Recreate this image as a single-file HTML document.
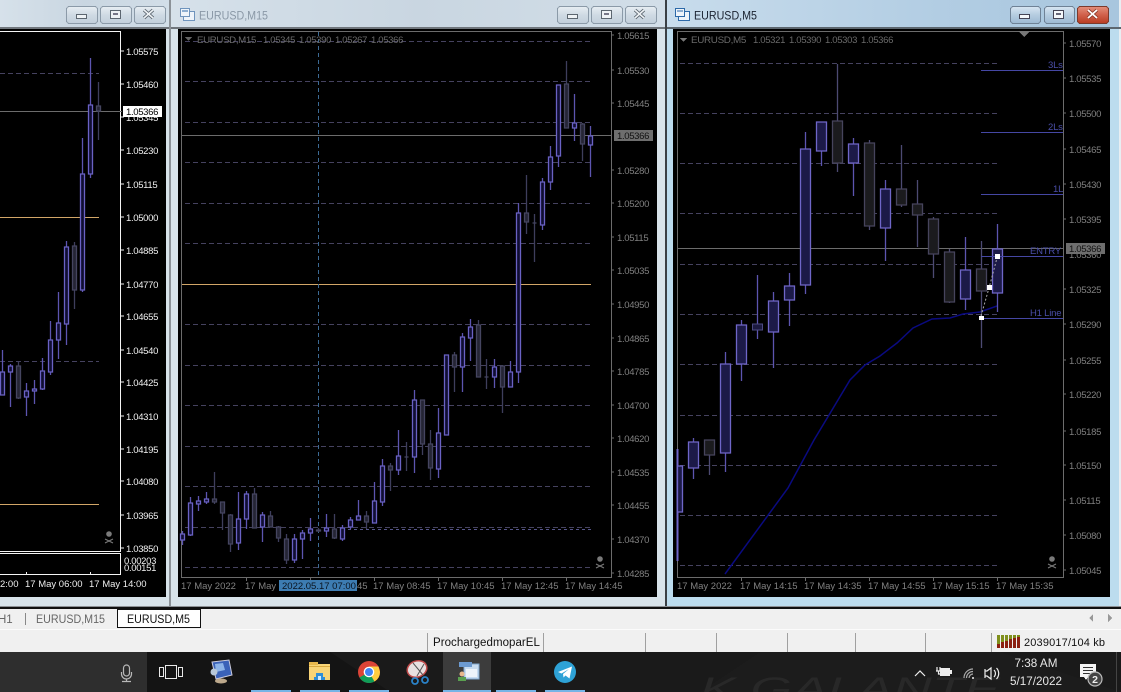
<!DOCTYPE html>
<html><head><meta charset="utf-8"><title>EURUSD</title>
<style>
html,body{margin:0;padding:0;background:#000;width:1121px;height:692px;overflow:hidden}
svg{display:block;position:absolute;left:0;top:0}
text{font-family:"Liberation Sans",sans-serif}
.p{font-size:9.5px;letter-spacing:-.33px;fill:#808080}
.w{font-size:9.5px;letter-spacing:-.33px;fill:#f0f0f0}
.t{font-size:9.5px;fill:#808080}
.tw{font-size:9.5px;fill:#eee}
.l{font-size:9.5px;letter-spacing:-.33px;fill:#6a6a6a}
.g{stroke:#45425f;stroke-width:1;stroke-dasharray:5 3;fill:none}
.bw,.bb,.rw,.rb,.bb5,.rb5,.rw5{shape-rendering:auto;stroke-width:1.3}
.bw{stroke:#5c55b0;fill:none}
.bb{stroke:#6a62c4;fill:#100e32}
.rw{stroke:#3e3e5c;fill:none}
.rb{stroke:#454560;fill:#252535}
.bb5{stroke:#6f66c8;fill:#1c1a48}
.rb5{stroke:#46445c;fill:#1b1b1e}
.rw5{stroke:#4c4a72;fill:none}
.lv{font-size:9.5px;fill:#4a4ea8;letter-spacing:-.2px}
.btn{stroke:#8b9aa8;stroke-width:1}
.gl{fill:none;stroke:#555;stroke-width:1.2}
</style></head><body>
<svg width="1121" height="692" viewBox="0 0 1121 692" xmlns="http://www.w3.org/2000/svg" shape-rendering="crispEdges">
<defs>
<linearGradient id="ti" x1="0" y1="0" x2="1" y2="0"><stop offset="0" stop-color="#d6e1ea"/><stop offset=".5" stop-color="#c9d6e1"/><stop offset="1" stop-color="#d2dee8"/></linearGradient>
<linearGradient id="ta" x1="0" y1="0" x2="1" y2="0"><stop offset="0" stop-color="#c8dcec"/><stop offset=".6" stop-color="#b2cde3"/><stop offset="1" stop-color="#a8c6de"/></linearGradient>
<linearGradient id="bg" x1="0" y1="0" x2="0" y2="1"><stop offset="0" stop-color="#e8eef3"/><stop offset=".5" stop-color="#cfdae4"/><stop offset="1" stop-color="#c2cfdb"/></linearGradient>
<linearGradient id="ba" x1="0" y1="0" x2="0" y2="1"><stop offset="0" stop-color="#d8e6f2"/><stop offset=".5" stop-color="#b5cce0"/><stop offset="1" stop-color="#9dbad3"/></linearGradient>
<linearGradient id="br" x1="0" y1="0" x2="0" y2="1"><stop offset="0" stop-color="#e4907c"/><stop offset=".5" stop-color="#d0604a"/><stop offset="1" stop-color="#b83c22"/></linearGradient>
</defs>

<!-- frames -->
<rect width="1121" height="692" fill="#f0f0f0"/>
<rect x="0" y="0" width="169" height="607" fill="#d8e3ea"/>
<rect x="0" y="0" width="169" height="28" fill="url(#ti)"/>
<rect x="169" y="0" width="2" height="607" fill="#8c9298"/>
<rect x="171" y="0" width="494" height="607" fill="#d8e3ea"/>
<rect x="171" y="0" width="494" height="28" fill="url(#ti)"/>
<rect x="665" y="0" width="2" height="607" fill="#3a3f44"/>
<rect x="667" y="0" width="454" height="607" fill="#bcdcee"/>
<rect x="667" y="0" width="454" height="28" fill="url(#ta)"/>
<rect x="1119" y="0" width="2" height="607" fill="#e8eef2"/>
<rect x="0" y="27" width="169" height="2" fill="#70767c"/>
<rect x="171" y="27" width="494" height="2" fill="#70767c"/>
<rect x="667" y="27" width="454" height="2" fill="#5c666e"/>
<rect x="0" y="606" width="1121" height="1" fill="#8c9094"/>
<rect x="0" y="607" width="1121" height="2" fill="#101010"/>

<!-- black panes -->
<rect x="0" y="29" width="166" height="568" fill="#000"/>
<rect x="178" y="29" width="479" height="568" fill="#000"/>
<rect x="673" y="29" width="437" height="568" fill="#000"/>

<!-- title text & icons -->
<text x="199" y="19.5" font-size="11.5" fill="#8a98a6" textLength="69" lengthAdjust="spacingAndGlyphs">EURUSD,M15</text>
<text x="694" y="19.5" font-size="11.5" fill="#1a2230" textLength="63" lengthAdjust="spacingAndGlyphs">EURUSD,M5</text>
<g stroke="#6f94bd" fill="#eef4fa">
<rect x="183.5" y="11.5" width="11" height="9"/><rect x="180.5" y="8.5" width="9" height="8"/>
<rect x="678.5" y="11.5" width="11" height="9" stroke="#2c69a8"/><rect x="675.5" y="8.5" width="9" height="8" stroke="#2c69a8"/>
</g>
<path d="M182 11h6M677 11h6" stroke="#2c69a8" fill="none"/>

<!-- buttons win 1 -->
<rect class="btn" x="66.5" y="6.5" width="31" height="17" rx="3" fill="url(#bg)"/>
<rect class="btn" x="100.5" y="6.5" width="31" height="17" rx="3" fill="url(#bg)"/>
<rect class="btn" x="134.5" y="6.5" width="31" height="17" rx="3" fill="url(#bg)"/>
<rect x="76.5" y="14.5" width="10" height="4" fill="#eef2f5" stroke="#5c6670"/>
<rect x="110.5" y="10.5" width="10" height="8" fill="#eef2f5" stroke="#5c6670"/><rect x="113" y="13" width="5" height="2" fill="#778"/>
<path d="M144 10l9 8M153 10l-9 8" stroke="#5c6670" stroke-width="3.4" shape-rendering="auto"/><path d="M144 10l9 8M153 10l-9 8" stroke="#eef2f5" stroke-width="1.6" shape-rendering="auto"/>
<!-- buttons win 2 -->
<rect class="btn" x="557.5" y="6.5" width="31" height="17" rx="3" fill="url(#bg)"/>
<rect class="btn" x="591.5" y="6.5" width="31" height="17" rx="3" fill="url(#bg)"/>
<rect class="btn" x="625.5" y="6.5" width="31" height="17" rx="3" fill="url(#bg)"/>
<rect x="567.5" y="14.5" width="10" height="4" fill="#eef2f5" stroke="#5c6670"/>
<rect x="601.5" y="10.5" width="10" height="8" fill="#eef2f5" stroke="#5c6670"/><rect x="604" y="13" width="5" height="2" fill="#778"/>
<path d="M635 10l9 8M644 10l-9 8" stroke="#5c6670" stroke-width="3.4" shape-rendering="auto"/><path d="M635 10l9 8M644 10l-9 8" stroke="#eef2f5" stroke-width="1.6" shape-rendering="auto"/>
<!-- buttons win 3 -->
<rect x="1010.5" y="6.5" width="30" height="17" rx="3" fill="url(#ba)" stroke="#6f8296"/>
<rect x="1044.5" y="6.5" width="30" height="17" rx="3" fill="url(#ba)" stroke="#6f8296"/>
<rect x="1077.5" y="6.5" width="31" height="17" rx="3" fill="url(#br)" stroke="#7c3a2c"/>
<rect x="1019.5" y="14.5" width="10" height="4" fill="#f4f7fa" stroke="#445"/>
<rect x="1053.5" y="10.5" width="10" height="8" fill="#f4f7fa" stroke="#445"/><rect x="1056" y="13" width="5" height="2" fill="#667"/>
<path d="M1088 10l9 8M1097 10l-9 8" stroke="#8a3a2c" stroke-width="3.4" shape-rendering="auto"/><path d="M1088 10l9 8M1097 10l-9 8" stroke="#fff" stroke-width="1.8" shape-rendering="auto"/>

<!-- ================= CHART 1 ================= -->
<path d="M0 31.5H120.5V551.5H0M0 553.5H120.5V574.5H0" fill="none" stroke="#f4f4f4"/>
<path d="M121 51h3M121 84h3M121 117h3M121 150h3M121 184h3M121 217h3M121 250h3M121 284h3M121 316h3M121 350h3M121 382h3M121 416h3M121 449h3M121 481h3M121 515h3M121 548h3M26.5 575v-3M90.5 575v-3" stroke="#eee" fill="none"/>
<path class="g" d="M0 73.5H99M0 361.5H99"/>
<path d="M0 217.5H99M0 504.5H99" stroke="#d2a668" fill="none"/>
<path d="M0 111.5H122" stroke="#6c6c6c" fill="none"/>
<path class="bw" d="M2.5 350V395M10.5 364V407M26.5 383V416M34.5 380V404M42.5 358V390M50.5 321V375M58.5 292V359M66.5 241V345M82.5 138V292M90.5 58V178"/>
<path class="rw" d="M18.5 362V399M74.5 242V309M98.5 82V140"/>
<path class="bb" d="M.5 372h4v23h-4zM8.5 366h4v6h-4zM24.5 391h4v6h-4zM32.5 389h4v2h-4zM40.5 371h4v18h-4zM48.5 340h4v32h-4zM56.5 323h4v17h-4zM64.5 247h4v77h-4zM80.5 174h4v116h-4zM88.5 105h4v69h-4z"/>
<path class="rb" d="M16.5 366h4v32h-4zM72.5 246h4v44h-4zM96.5 106h4v5h-4z"/>
<g>
<text class="w" x="126" y="55">1.05575</text><text class="w" x="126" y="88">1.05460</text><text class="w" x="126" y="121">1.05345</text><text class="w" x="126" y="154">1.05230</text><text class="w" x="126" y="188">1.05115</text><text class="w" x="126" y="221">1.05000</text><text class="w" x="126" y="254">1.04885</text><text class="w" x="126" y="288">1.04770</text><text class="w" x="126" y="320">1.04655</text><text class="w" x="126" y="354">1.04540</text><text class="w" x="126" y="386">1.04425</text><text class="w" x="126" y="420">1.04310</text><text class="w" x="126" y="453">1.04195</text><text class="w" x="126" y="485">1.04080</text><text class="w" x="126" y="519">1.03965</text><text class="w" x="126" y="552">1.03850</text><text class="w" x="124" y="564">0.00203</text><text class="w" x="124" y="571">0.00151</text>
</g>
<rect x="123" y="106" width="39" height="11" fill="#fff"/>
<text x="126" y="115" font-size="9.5" letter-spacing="-.33" fill="#000">1.05366</text>
<text class="tw" x="0" y="587">2:00</text><text class="tw" x="25" y="587">17 May 06:00</text><text class="tw" x="89" y="587">17 May 14:00</text>

<!-- ================= CHART 2 ================= -->
<path d="M181.5 31.5H611.5V577.5H181.5Z" fill="none" stroke="#6c6c6c"/>
<path d="M612 35h2M612 70h2M612 103h2M612 170h2M612 203h2M612 237h2M612 270h2M612 304h2M612 338h2M612 371h2M612 405h2M612 438h2M612 472h2M612 505h2M612 539h2M612 573h2M246.5 578v3M310.5 578v3M374.5 578v3M438.5 578v3M502.5 578v3M566.5 578v3" stroke="#6c6c6c" fill="none"/>
<path class="g" d="M185 41.5H592M185 81.5H592M185 122.5H592M185 162.5H592M185 203.5H592M185 243.5H592M185 324.5H592M185 365.5H592M185 405.5H592M185 446.5H592M185 486.5H592M185 527.5H592M185 567.5H592"/>
<path d="M342 529.5H592" stroke="#55558a" stroke-dasharray="3 3" fill="none"/>
<path d="M182 284.5H591" stroke="#d2a668" fill="none"/>
<path d="M182 135.5H611" stroke="#6c6c6c" fill="none"/>
<path d="M318.5 32V577" stroke="#3c6a94" stroke-dasharray="4 3" fill="none"/>
<path class="bw" d="M182.5 531V545M190.5 497V536M198.5 496V511M206.5 492V504M238.5 492V550M246.5 491V529M262.5 512V542M294.5 534V563M302.5 530V559M310.5 518V541M326.5 514V537M342.5 525V541M350.5 517V529M358.5 500V520M374.5 482V523M382.5 459V506M398.5 430V475M414.5 390V473M438.5 408V478M446.5 355V435M462.5 333V392M470.5 319V361M494.5 359V388M510.5 361V387M518.5 203V383M542.5 178V230M550.5 146V190M558.5 85V167M574.5 94V141M590.5 126V177"/>
<path class="rw" d="M214.5 472V504M222.5 502V530M230.5 514V552M254.5 488V528M270.5 511V527M278.5 526V542M286.5 534V564M318.5 528V532M334.5 514V539M366.5 511V529M390.5 463V491M406.5 442V471M422.5 400V455M430.5 430V480M454.5 352V392M478.5 320V377M486.5 359V389M502.5 365V413M526.5 175V234M534.5 214V262M566.5 61V128M582.5 123V161"/>
<path class="bb" d="M180.5 534h4v6h-4zM188.5 503h4v32h-4zM196.5 501h4v3h-4zM204.5 499h4v3h-4zM236.5 519h4v24h-4zM244.5 494h4v25h-4zM260.5 515h4v12h-4zM292.5 539h4v21h-4zM300.5 533h4v6h-4zM308.5 529h4v4h-4zM324.5 528h4v3h-4zM340.5 528h4v11h-4zM348.5 520h4v7h-4zM356.5 516h4v4h-4zM372.5 501h4v22h-4zM380.5 466h4v36h-4zM396.5 456h4v14h-4zM412.5 400h4v57h-4zM436.5 433h4v36h-4zM444.5 355h4v80h-4zM460.5 337h4v30h-4zM468.5 327h4v11h-4zM492.5 367h4v10h-4zM508.5 372h4v15h-4zM516.5 213h4v159h-4zM540.5 182h4v43h-4zM548.5 157h4v25h-4zM556.5 85h4v71h-4zM572.5 123h4v5h-4zM588.5 136h4v9h-4z"/>
<path class="rb" d="M212.5 499h4v3h-4zM220.5 502h4v11h-4zM228.5 515h4v29h-4zM252.5 494h4v34h-4zM268.5 516h4v11h-4zM276.5 527h4v11h-4zM284.5 539h4v21h-4zM316.5 530h4v1h-4zM332.5 529h4v9h-4zM364.5 516h4v6h-4zM388.5 466h4v4h-4zM404.5 457h4M420.5 400h4v44h-4zM428.5 444h4v24h-4zM452.5 355h4v12h-4zM476.5 325h4v52h-4zM484.5 377h4M500.5 366h4v21h-4zM524.5 213h4v9h-4zM532.5 223h4M564.5 84h4v44h-4zM580.5 124h4v20h-4z"/>
<path d="M185 37h7l-3.500 4z" fill="#666"/>
<text class="l" x="197" y="43" textLength="59" lengthAdjust="spacingAndGlyphs">EURUSD,M15</text><text class="l" x="263" y="43">1.05345</text><text class="l" x="299" y="43">1.05390</text><text class="l" x="335" y="43">1.05267</text><text class="l" x="371" y="43">1.05366</text>
<g>
<text class="p" x="617" y="39">1.05615</text><text class="p" x="617" y="74">1.05530</text><text class="p" x="617" y="107">1.05445</text><text class="p" x="617" y="174">1.05280</text><text class="p" x="617" y="207">1.05200</text><text class="p" x="617" y="241">1.05115</text><text class="p" x="617" y="274">1.05035</text><text class="p" x="617" y="308">1.04950</text><text class="p" x="617" y="342">1.04865</text><text class="p" x="617" y="375">1.04785</text><text class="p" x="617" y="409">1.04700</text><text class="p" x="617" y="442">1.04620</text><text class="p" x="617" y="476">1.04535</text><text class="p" x="617" y="509">1.04455</text><text class="p" x="617" y="543">1.04370</text><text class="p" x="617" y="577">1.04285</text>
</g>
<rect x="614" y="130" width="39" height="11" fill="#6e6e6e"/>
<text x="617" y="139" font-size="9.5" letter-spacing="-.33" fill="#111">1.05366</text>
<text class="t" x="181" y="589">17 May 2022</text><text class="t" x="245" y="589">17 May</text>
<rect x="279" y="580" width="78" height="11" fill="#3d7cb2"/>
<text x="282" y="589" font-size="9.5" fill="#0a1420">2022.05.17 07:00</text>
<text class="t" x="357" y="589">45</text><text class="t" x="373" y="589">17 May 08:45</text><text class="t" x="437" y="589">17 May 10:45</text><text class="t" x="501" y="589">17 May 12:45</text><text class="t" x="565" y="589">17 May 14:45</text>

<!-- ================= CHART 3 ================= -->
<path d="M677.500 31.500H1063.500V577.500H677.500Z" fill="none" stroke="#6c6c6c"/>
<path d="M1064 43h2M1064 78h2M1064 113h2M1064 149h2M1064 184h2M1064 219h2M1064 289h2M1064 324h2M1064 360h2M1064 394h2M1064 431h2M1064 465h2M1064 500h2M1064 535h2M1064 570h2M741.500 578v3M805.500 578v3M869.500 578v3M933.500 578v3M997.500 578v3" stroke="#6c6c6c" fill="none"/>
<path class="g" d="M680 63.500H998M680 113.500H998M680 163.500H998M680 213.500H998M680 264.500H998M680 314.500H998M680 364.500H998M680 415.500H998M680 465.500H998M680 515.500H998M680 565.500H998"/>
<path d="M678 248.500H1063" stroke="#6c6c6c" fill="none"/>
<path d="M725 574L788 488L814 440L850 380L865 365L880 356L897 343L913 328L932 319L950 318L963 314L980 312L997 306" fill="none" stroke="#0a0a80" stroke-width="1.5" shape-rendering="auto"/>
<path class="bw" d="M693.500 438V479M725.500 352V472M741.500 320V381M757.500 275V339M773.500 292V368M789.500 273V326M805.500 132V294M821.500 122V166M853.500 138V196M885.500 180V261M965.500 237V310M997.500 224V312"/>
<path d="M677.500 449V561" stroke="#6f66c8" stroke-width="2" fill="none"/>
<path class="rw5" d="M709.500 440V475M837.500 64V172M869.500 140V230M901.500 145V207M917.500 180V247M933.500 217V278M949.500 249V303M981.500 241V348"/>
<path class="bb5" d="M677.500 466H682.500V512H677.500ZM688.500 442h10v26h-10zM720.500 364h10v89h-10zM736.500 325h10v39h-10zM768.500 301h10v31h-10zM784.500 286h10v14h-10zM800.500 149h10v136h-10zM816.500 122h10v29h-10zM848.500 144h10v19h-10zM880.500 189h10v39h-10zM960.500 270h10v29h-10zM992.500 249h10v44h-10z"/>
<path class="rb5" d="M704.500 440h10v15h-10zM832.500 121h10v42h-10zM864.500 143h10v83h-10zM896.500 189h10v16h-10zM912.500 204h10v11h-10zM928.500 219h10v35h-10zM944.500 252h10v50h-10zM976.500 269h10v22h-10z"/>
<path d="M752.500 324h10v6h-10z" fill="#1c1a40" stroke="#4c4a82"/>
<path d="M981 70.500H1063M981 132.500H1063M981 194.500H1063M981 256.500H1063M981 318.500H1063" stroke="#4547a4" fill="none"/>
<path d="M981 316L989 288L997 258" fill="none" stroke="#aaa" stroke-dasharray="2 2" shape-rendering="auto"/>
<path d="M979 316h5v4h-5zM987 285h5v5h-5zM995 254h5v5h-5z" fill="#fff"/>
<text class="lv" x="1048" y="68">3Ls</text><text class="lv" x="1048" y="130">2Ls</text><text class="lv" x="1053" y="192">1L</text><text class="lv" x="1030" y="254">ENTRY</text><text class="lv" x="1030" y="316">H1 Line</text>
<path d="M1018 31h12l-6 6z" fill="#777"/>
<path d="M680 38h7l-3.500 4z" fill="#777"/>
<text class="l" x="691" y="43" textLength="55" lengthAdjust="spacingAndGlyphs">EURUSD,M5</text><text class="l" x="753" y="43">1.05321</text><text class="l" x="789" y="43">1.05390</text><text class="l" x="825" y="43">1.05303</text><text class="l" x="861" y="43">1.05366</text>
<g>
<text class="p" x="1069" y="47">1.05570</text><text class="p" x="1069" y="82">1.05535</text><text class="p" x="1069" y="117">1.05500</text><text class="p" x="1069" y="153">1.05465</text><text class="p" x="1069" y="188">1.05430</text><text class="p" x="1069" y="223">1.05395</text><text class="p" x="1069" y="258">1.05360</text><text class="p" x="1069" y="293">1.05325</text><text class="p" x="1069" y="328">1.05290</text><text class="p" x="1069" y="364">1.05255</text><text class="p" x="1069" y="398">1.05220</text><text class="p" x="1069" y="435">1.05185</text><text class="p" x="1069" y="469">1.05150</text><text class="p" x="1069" y="504">1.05115</text><text class="p" x="1069" y="539">1.05080</text><text class="p" x="1069" y="574">1.05045</text>
</g>
<rect x="1066" y="243" width="39" height="11" fill="#6e6e6e"/>
<text x="1069" y="252" font-size="9.5" letter-spacing="-.33" fill="#111">1.05366</text>
<text class="t" x="677" y="589">17 May 2022</text><text class="t" x="740" y="589">17 May 14:15</text><text class="t" x="804" y="589">17 May 14:35</text><text class="t" x="868" y="589">17 May 14:55</text><text class="t" x="932" y="589">17 May 15:15</text><text class="t" x="996" y="589">17 May 15:35</text>

<!-- skull icons -->
<g fill="#7a7a7a" stroke="#7a7a7a" shape-rendering="auto">
<g transform="translate(109 537)"><circle cx="0" cy="-3" r="2.800" stroke="none"/><path d="M-4 2L4 6M4 2L-4 6" fill="none"/></g>
<g transform="translate(600 562)"><circle cx="0" cy="-3" r="2.800" stroke="none"/><path d="M-4 2L4 6M4 2L-4 6" fill="none"/></g>
<g transform="translate(1052 562)"><circle cx="0" cy="-3" r="2.800" stroke="none"/><path d="M-4 2L4 6M4 2L-4 6" fill="none"/></g>
</g>

<!-- tab bar -->
<rect x="0" y="609" width="1121" height="21" fill="#f0f0f0"/>
<rect x="0" y="629" width="1121" height="1" fill="#fbfbfb"/>
<text x="-2" y="623" font-size="11.500" fill="#666">H1</text>
<rect x="25" y="613" width="1" height="12" fill="#888"/>
<text x="36" y="623" font-size="11.500" fill="#666" textLength="69" lengthAdjust="spacingAndGlyphs">EURUSD,M15</text>
<rect x="117.500" y="609.500" width="83" height="18" fill="#fff" stroke="#111"/>
<text x="127" y="623" font-size="11.500" fill="#111" textLength="63" lengthAdjust="spacingAndGlyphs">EURUSD,M5</text>
<path d="M1093 614v8l-4-4zM1108 614v8l4-4z" fill="#999"/>

<!-- status bar -->
<rect x="0" y="630" width="1121" height="22" fill="#f0f0f0"/>
<path d="M427.500 633V652M543.500 633V652M645.500 633V652M716.500 633V652M787.500 633V652M855.500 633V652M925.500 633V652M991.500 633V652" stroke="#a0a0a0" fill="none"/>
<text x="433" y="646" font-size="11.500" fill="#111" letter-spacing=".1" textLength="107">ProchargedmoparEL</text>
<g>
<path d="M997 635h3v13h-3zM1001 635h3v13h-3zM1005 635h3v13h-3zM1009 635h3v13h-3zM1013 635h3v13h-3zM1017 635h3v13h-3z" fill="#8c1f10"/>
<path d="M997 635h3v9h-3zM1001 635h3v7h-3zM1005 635h3v6h-3zM1009 635h3v4h-3zM1013 635h3v3h-3zM1017 635h3v2h-3z" fill="#7f8f1c"/>
</g>
<text x="1024" y="646" font-size="11" fill="#111" textLength="81">2039017/104 kb</text>

<!-- taskbar -->
<rect x="0" y="652" width="1121" height="40" fill="#1a1a1a"/>
<rect x="0" y="652" width="147" height="40" fill="#2e2e2e"/>
<path d="M147 652H330L390 692H147Z" fill="#141414" shape-rendering="auto"/>
<path d="M700 692L760 652H1000L1121 692Z" fill="#1c1c1c" shape-rendering="auto"/>
<text x="700" y="700" font-size="32" font-style="italic" font-family="Liberation Serif" fill="#282828" textLength="300" lengthAdjust="spacingAndGlyphs">K GALANTE</text>
<rect x="443" y="652" width="48" height="40" fill="#3c3c3c"/>
<!-- underlines -->
<path d="M251 690h40v2h-40zM300 690h40v2h-40zM349 690h40v2h-40zM443 690h48v2h-48zM496 690h40v2h-40zM545 690h40v2h-40z" fill="#76b4e6"/>
<!-- mic -->
<g shape-rendering="auto" fill="none" stroke="#b8b8b8" stroke-width="1.200">
<rect x="123.500" y="665" width="6" height="11" rx="3"/><path d="M121.500 672v2a5 5 0 0 0 10 0v-2M126.500 679v2M122 681.500h9"/>
</g>
<!-- task view -->
<g fill="none" stroke="#e8e8e8" stroke-width="1.200"><rect x="159.500" y="667.500" width="4" height="9"/><rect x="165.500" y="665.500" width="11" height="13"/><rect x="178.500" y="667.500" width="4" height="9"/></g>
<!-- computer icon -->
<g shape-rendering="auto"><path d="M212 662l17-2 3 15-16 4z" fill="#3a62b8" stroke="#ccd" stroke-width="1"/><path d="M215 664l8-1 2 7-9 2z" fill="#8db4e8"/><ellipse cx="221" cy="681" rx="6" ry="2.500" fill="#bda98c"/><circle cx="214" cy="672" r="3.500" fill="#b8c8d8"/></g>
<!-- folder -->
<g><rect x="309" y="664" width="21" height="16" fill="#f8d477"/><rect x="309" y="662" width="9" height="3" fill="#e8b84c"/><rect x="309" y="666" width="21" height="1" fill="#d8a83c"/><rect x="316" y="673" width="7" height="7" fill="#2f8ed8"/><rect x="314" y="677" width="11" height="3" fill="#2f8ed8"/><rect x="318" y="676" width="3" height="4" fill="#cfe8fa"/></g>
<!-- chrome -->
<g shape-rendering="auto"><circle cx="369" cy="672" r="11" fill="#db4437"/><path d="M369 672L359.500 677.500A11 11 0 0 0 374.500 681.500Z" fill="#0f9d58"/><path d="M369 672L374.500 681.500A11 11 0 0 0 380 672L378.500 666.500H369Z" fill="#ffcd40"/><circle cx="369" cy="672" r="5.300" fill="#fff"/><circle cx="369" cy="672" r="4" fill="#4285f4"/></g>
<!-- snipping -->
<g shape-rendering="auto"><ellipse cx="417" cy="669" rx="10" ry="8" fill="#e8e0e0" stroke="#c04a4a" stroke-width="1.500" transform="rotate(-20 417 669)"/><path d="M413 663l10 12M424 664l-7 12" stroke="#555" fill="none"/><circle cx="425" cy="680" r="3" fill="none" stroke="#2a82c8" stroke-width="1.800"/><circle cx="415" cy="681" r="3" fill="none" stroke="#2a82c8" stroke-width="1.800"/></g>
<!-- mt4 icon -->
<g><rect x="464" y="664" width="15" height="15" fill="#c8dcf0" stroke="#7fa6cc"/><rect x="459" y="662" width="13" height="5" fill="#6c9ad0"/><rect x="466" y="669" width="11" height="8" fill="#eef4fa"/><circle cx="462" cy="674" r="2.500" fill="#e8b88c" shape-rendering="auto"/><rect x="458" y="677" width="8" height="4" fill="#5aa050"/></g>
<!-- telegram -->
<g shape-rendering="auto"><circle cx="565" cy="672" r="11" fill="#2ea2d6"/><path d="M558 672l14-5.500-2.500 12-4-3-2 2-.5-3.500 6-5-7.500 4.500z" fill="#fff"/></g>

<!-- tray -->
<g shape-rendering="auto" fill="none" stroke="#eee" stroke-width="1.200">
<path d="M915 676l5-5 5 5"/>
<rect x="940" y="668" width="10" height="8" fill="#eee" stroke="none"/><path d="M937 667v4M940 667v4M936 671h5M938.500 671v3h2"/><rect x="950" y="670" width="2" height="4" fill="#eee" stroke="none"/>
<path d="M964 678a9 9 0 0 1 9-9M966.500 678a6.500 6.500 0 0 1 6.500-6.500M969 678a4 4 0 0 1 4-4" stroke="#aaa"/><circle cx="973" cy="678" r="1" fill="#eee" stroke="none"/>
<path d="M985 669v9M985 671h2l4-3v11l-4-3h-2M994 670a5 5 0 0 1 0 7M996.500 668a8 8 0 0 1 0 11"/>
</g>
<text x="1036" y="667" text-anchor="middle" font-size="11.700" fill="#e6e6e6">7:38 AM</text>
<text x="1036" y="685" text-anchor="middle" font-size="11.700" fill="#e6e6e6">5/17/2022</text>
<rect x="1080" y="664" width="16" height="13" fill="#f4f4f4"/><path d="M1083 667.500h10M1083 670.500h10M1083 673.500h7" stroke="#333" fill="none"/><path d="M1084 677l2 3 2-3z" fill="#f4f4f4"/>
<circle cx="1095" cy="679" r="7" fill="#444" stroke="#bbb" stroke-width="1.200" shape-rendering="auto"/>
<text x="1095" y="683" text-anchor="middle" font-size="10.500" font-weight="bold" fill="#eee">2</text>
<rect x="1116" y="652" width="1" height="40" fill="#444"/>
</svg>
</body></html>
